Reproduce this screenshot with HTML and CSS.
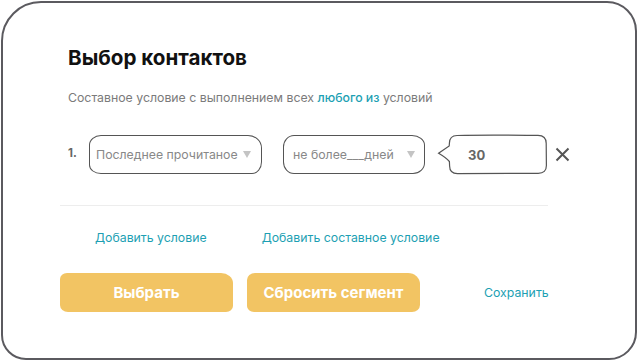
FILE: index.html
```html
<!DOCTYPE html>
<html lang="ru">
<head>
    <meta charset="UTF-8">
    <meta name="viewport" content="width=device-width, initial-scale=1.0">
    <title>Выбор контактов</title>
    <link rel="stylesheet" href="styles.css">
</head>
<body>
    <div class="card">
        <h1 class="title">Выбор контактов</h1>
        <p class="subtitle">Составное условие с выполнением всех <a href="#" class="accent">любого из</a> условий</p>

        <div class="row">
            <span class="num">1.</span>
            <div class="select select-field">
                <span>Последнее прочитаное</span>
                <svg class="arrow" width="8" height="7" viewBox="0 0 8 7"><path d="M0 0H8L4 7Z" fill="#c4c4c4"/></svg>
            </div>
            <div class="select select-range">
                <span>не более___дней</span>
                <svg class="arrow" width="8" height="7" viewBox="0 0 8 7"><path d="M0 0H8L4 7Z" fill="#c4c4c4"/></svg>
            </div>
            <div class="bubble">
                <svg class="bubble-bg" width="111" height="41" viewBox="0 0 111 41">
                    <path d="M20 1.5C50 0.6 80 1.2 101 1.4Q109.3 1.6 109.2 9.5L109.4 31.5Q109.4 39.4 101 39.3L20.5 39.6Q12.6 39.5 12.6 32L12.4 27.5Q9 23.5 1.6 19.2L12.2 12L12.4 9.2Q12.5 1.7 20 1.5Z" fill="#fff" stroke="#555" stroke-width="1.2"/>
                </svg>
                <span class="bubble-value">30</span>
            </div>
            <button type="button" class="remove">
                <svg width="15" height="15" viewBox="0 0 15 15"><path d="M1.5 1.5L13.5 13.5M13.5 1.5L1.5 13.5" stroke="#555" stroke-width="2"/></svg>
            </button>
        </div>

        <div class="divider"></div>

        <div class="links">
            <a href="#" class="link link-add">Добавить условие</a>
            <a href="#" class="link">Добавить составное условие</a>
        </div>

        <div class="actions">
            <button type="button" class="btn btn-choose">Выбрать</button>
            <button type="button" class="btn btn-reset">Сбросить сегмент</button>
            <a href="#" class="link link-save">Сохранить</a>
        </div>
    </div>
</body>
</html>
```

FILE: styles.css
```css
*{
    box-sizing: border-box;
}
body{
    margin: 0;
    background-color: #fff;
    font-family: Inter, "Noto Sans", sans-serif;
}
.card{
    width: 636px;
    height: 359px;
    margin: 1px 0 0 1px;
    border: 2px solid #5b5a5f;
    border-radius: 40px 30px 28px 25px;
    padding: 43px 0 0 57px;
}
.title{
    margin: 0 0 0 8px;
    font-size: 20.6px;
    line-height: 24px;
    font-weight: 700;
    color: #111;
}
.subtitle{
    margin: 20px 0 0 8px;
    font-size: 12.3px;
    line-height: 16px;
    color: #7b7b7b;
}
.accent{
    color: #1d9fb3;
    font-weight: 500;
    text-decoration: none;
}
.row{
    display: flex;
    align-items: center;
    height: 41px;
    margin-top: 28px;
    padding-left: 8px;
}
.num{
    width: 21px;
    margin-top: -4px;
    font-size: 11.5px;
    font-weight: 700;
    color: #666;
}
.select{
    display: flex;
    align-items: center;
    justify-content: space-between;
    height: 39px;
    border: 1.2px solid #555;
    font-size: 12.3px;
    color: #888;
}
.select-field{
    width: 173px;
    padding: 0 10px 0 6px;
    border-radius: 12px 14px 10px 12px / 10px 13px 12px 9px;
}
.select-range{
    width: 142px;
    margin-left: 21px;
    padding: 0 9px 0 9px;
    border-radius: 11px 13px 12px 11px / 12px 10px 11px 12px;
}
.arrow{
    display: block;
}
.bubble{
    position: relative;
    width: 111px;
    height: 41px;
    margin-left: 12px;
    display: flex;
    align-items: center;
    padding-left: 31px;
}
.bubble-bg{
    position: absolute;
    left: 0;
    top: 0;
}
.bubble-value{
    position: relative;
    font-size: 13px;
    font-weight: 700;
    color: #666;
}
.remove{
    margin-left: 7px;
    padding: 0;
    border: none;
    background: none;
    display: flex;
}
.divider{
    width: 488px;
    height: 1px;
    margin-top: 30px;
    background-color: #ededed;
}
.links{
    display: flex;
    margin-top: 24px;
    padding-left: 35px;
    font-size: 12.3px;
    line-height: 16px;
}
.link{
    color: #1d9fb3;
    text-decoration: none;
}
.link-add{
    margin-right: 55px;
}
.actions{
    display: flex;
    align-items: center;
    margin-top: 27px;
}
.btn{
    height: 39px;
    border: none;
    background-color: #f2c463;
    color: #fff;
    font-family: Inter, "Noto Sans", sans-serif;
    font-size: 15px;
    font-weight: 700;
}
.btn-choose{
    width: 173px;
    border-radius: 7px 12px 7px 8px / 6px 10px 6px 7px;
}
.btn-reset{
    width: 173px;
    margin-left: 14px;
    border-radius: 8px 12px 8px 7px / 7px 11px 7px 6px;
}
.link-save{
    margin-left: 64px;
    font-size: 12.3px;
}
```
